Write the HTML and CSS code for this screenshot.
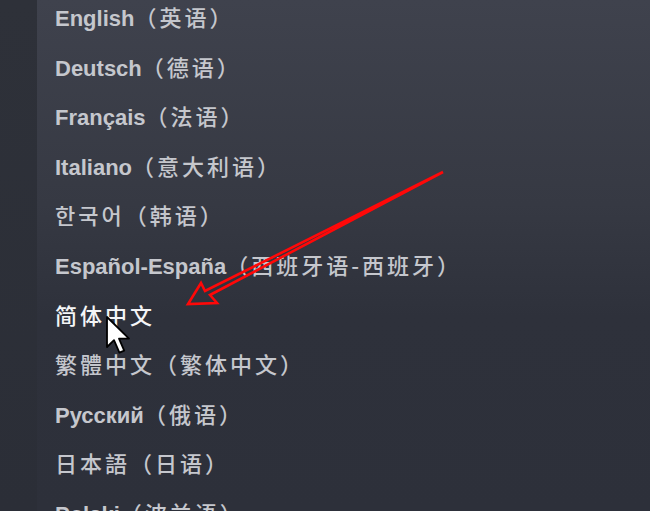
FILE: index.html
```html
<!DOCTYPE html>
<html lang="zh-CN">
<head>
<meta charset="utf-8">
<title>Language menu</title>
<link rel="stylesheet" href="styles.css">
</head>
<body>
<div class="screen">
  <div class="side"></div>
  <div class="menu">
    <ul class="list">
      <li class="item">English<span class="cjk">（英语）</span></li>
      <li class="item">Deutsch<span class="cjk">（德语）</span></li>
      <li class="item">Français<span class="cjk">（法语）</span></li>
      <li class="item">Italiano<span class="cjk">（意大利语）</span></li>
      <li class="item"><span class="cjk">한국어（韩语）</span></li>
      <li class="item">Español-España<span class="cjk">（西班牙语-西班牙）</span></li>
      <li class="item hover"><span class="cjk">简体中文</span></li>
      <li class="item"><span class="cjk">繁體中文（繁体中文）</span></li>
      <li class="item">Русский<span class="cjk">（俄语）</span></li>
      <li class="item"><span class="cjk">日本語（日语）</span></li>
      <li class="item">Polski<span class="cjk">（波兰语）</span></li>
    </ul>
  </div>
  <svg class="arrow" width="650" height="511" viewBox="0 0 650 511">
    <polygon points="443,172 210,295 217,303 188,304 201,283 205,291" fill="none" stroke="#ff0808" stroke-width="2.6" stroke-linejoin="miter"/>
  </svg>
  <svg class="cursor" width="30" height="42" viewBox="0 0 15 21">
    <path d="M1,1 L1,16 L4.5,12.6 L7.2,18.8 L9.6,17.8 L7,11.8 L12,11.8 Z" fill="#ffffff" stroke="#000000" stroke-width="0.9" stroke-linejoin="round"/>
  </svg>
</div>
</body>
</html>
```
FILE: styles.css
```css
* { box-sizing: border-box; }
html, body {
  margin: 0;
  padding: 0;
  width: 650px;
  height: 511px;
  overflow: hidden;
  background: #2c2f38;
}
.screen {
  position: relative;
  display: flex;
  width: 650px;
  height: 511px;
  overflow: hidden;
}
.side {
  width: 37px;
  flex: 0 0 37px;
  background: linear-gradient(to bottom, #2e3139 0%, #2b2e37 100%);
}
.menu {
  flex: 1;
  background: linear-gradient(to bottom, #3f424d 0%, #363943 40%, #2e313b 62%, #2d303a 100%);
  padding-left: 18px;
}
.list {
  list-style: none;
  margin: -8px 0 0 0;
  padding: 0;
}
.item {
  height: 49.6px;
  line-height: 49.6px;
  white-space: nowrap;
  font-family: "Liberation Sans", "Noto Sans CJK SC", sans-serif;
  font-size: 22px;
  font-weight: 700;
  color: #c5c7cd;
}
.cjk {
  font-family: "Noto Sans CJK SC", sans-serif;
  font-weight: 500;
  font-size: 22px;
  letter-spacing: 3px;
}
.item.hover {
  color: #f4f5f7;
}
.arrow {
  position: absolute;
  left: 0;
  top: 0;
  pointer-events: none;
}
.cursor {
  position: absolute;
  left: 105px;
  top: 315px;
  pointer-events: none;
}
```
